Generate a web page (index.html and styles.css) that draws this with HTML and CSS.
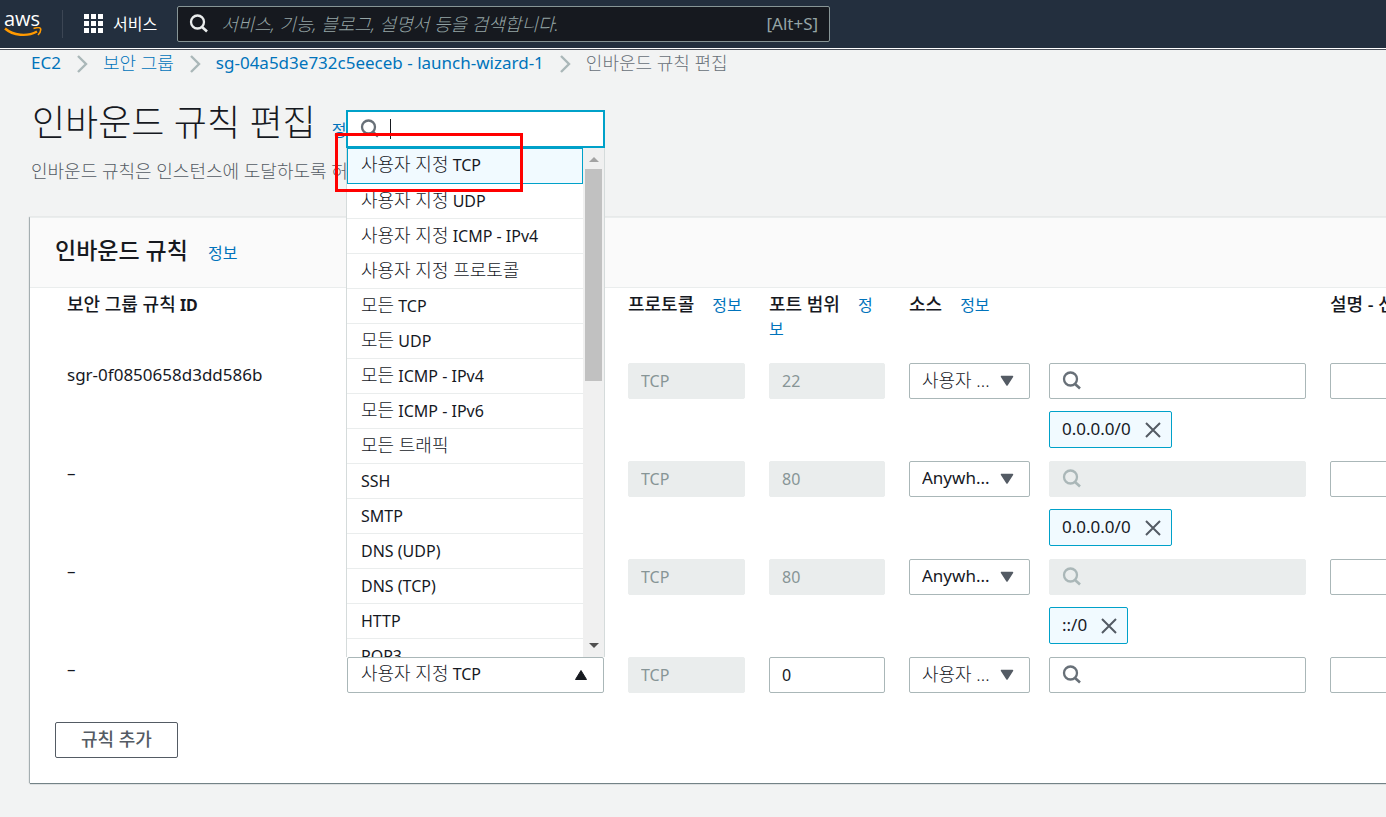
FILE: index.html
```html
<!DOCTYPE html>
<html lang="ko">
<head>
<meta charset="utf-8">
<title>인바운드 규칙 편집</title>
<link rel="stylesheet" href="styles.css">
</head>
<body>
<svg class="defs" aria-hidden="true">
  <symbol id="search" viewBox="0 0 20 20"><circle cx="8.500" cy="8" r="6.500" fill="none" stroke="currentColor" stroke-width="2.300"/><path d="M12.500 12.500 18 17.500" fill="none" stroke="currentColor" stroke-width="2.600"/></symbol>
  <symbol id="down" viewBox="0 0 14 12"><path d="M1.500 1.500h11L7 10z" fill="currentColor" stroke="currentColor" stroke-width="1.500" stroke-linejoin="round"/></symbol>
  <symbol id="up" viewBox="0 0 14 12"><path d="M1.500 10.500h11L7 1.500z" fill="currentColor" stroke="currentColor" stroke-width="1" stroke-linejoin="round"/></symbol>
  <symbol id="close" viewBox="0 0 16 16"><path d="M1 1l14 14M15 1 1 15" fill="none" stroke="currentColor" stroke-width="2"/></symbol>
  <symbol id="chevron" viewBox="0 0 12 20"><path d="M2 2l8 8-8 8" fill="none" stroke="currentColor" stroke-width="2.400"/></symbol>
</svg>
<header class="topbar">
  <a class="logo" href="#" aria-label="aws"><span class="logo-text">aws</span>
    <svg class="smile" viewBox="0 0 38 11"><path d="M1 1.500C9 8.500 23 10 33 4.500" fill="none" stroke="#ff9900" stroke-width="2.400"/><path d="M29.500 1.500C33 .5 36 .5 36.500 1.500 37 3 36 6 34 8" fill="none" stroke="#ff9900" stroke-width="1.600"/></svg>
  </a>
  <button class="services" type="button">
    <svg class="grid-icon" viewBox="0 0 19 19" fill="#fff"><path d="M0 0h5v5H0zM7 0h5v5H7zM14 0h5v5h-5zM0 7h5v5H0zM7 7h5v5H7zM14 7h5v5h-5zM0 14h5v5H0zM7 14h5v5H7zM14 14h5v5h-5z"/></svg>
    서비스
  </button>
  <label class="global-search">
    <svg class="icon"><use href="#search"/></svg>
    <input class="ko" type="text" aria-label="검색" placeholder="서비스, 기능, 블로그, 설명서 등을 검색합니다.">
    <span class="shortcut">[Alt+S]</span>
  </label>
</header>
<main class="page">
  <nav class="crumbs" aria-label="탐색 경로">
    <a href="#">EC2</a><svg class="chevron"><use href="#chevron"/></svg>
    <a class="ko" href="#">보안 그룹</a><svg class="chevron"><use href="#chevron"/></svg>
    <a href="#">sg-04a5d3e732c5eeceb - launch-wizard-1</a><svg class="chevron"><use href="#chevron"/></svg>
    <span class="ko current">인바운드 규칙 편집</span>
  </nav>
  <div class="title"><h1>인바운드 규칙 편집</h1><a class="info" href="#">정보</a></div>
  <p class="description ko">인바운드 규칙은 인스턴스에 도달하도록 허용된 수신 트래픽을 제어합니다.</p>

  <section class="panel">
    <div class="panel-head"><h2>인바운드 규칙</h2><a class="info" href="#">정보</a></div>
    <table class="rules">
      <colgroup><col class="c-id"><col class="c-type"><col class="c-proto"><col class="c-port"><col class="c-source"><col class="c-search"><col></colgroup>
      <thead>
        <tr>
          <th><span class="ko">보안 그룹 규칙</span> ID</th>
          <th><span class="ko">유형</span><a class="info" href="#">정보</a></th>
          <th><span class="ko">프로토콜</span><a class="info" href="#">정보</a></th>
          <th><span class="ko">포트 범위</span><a class="info" href="#">정보</a></th>
          <th colspan="2"><span class="ko">소스</span><a class="info" href="#">정보</a></th>
          <th><span class="ko">설명 - 선택 사항</span></th>
        </tr>
      </thead>
      <tbody>
        <tr>
          <td>sgr-0f0850658d3dd586b</td>
          <td></td>
          <td><input class="field" aria-label="프로토콜" value="TCP" disabled></td>
          <td><input class="field" aria-label="포트 범위" value="22" disabled></td>
          <td><div class="pick"><select class="field ko" aria-label="소스"><option>사용자 ...</option></select><svg class="arrow"><use href="#down"/></svg></div></td>
          <td><label class="lookup field"><svg class="icon"><use href="#search"/></svg><input aria-label="소스 검색"></label>
            <span class="token">0.0.0.0/0<button type="button" aria-label="제거"><svg class="x"><use href="#close"/></svg></button></span></td>
          <td><input class="field" aria-label="설명"></td>
        </tr>
        <tr>
          <td>–</td>
          <td></td>
          <td><input class="field" aria-label="프로토콜" value="TCP" disabled></td>
          <td><input class="field" aria-label="포트 범위" value="80" disabled></td>
          <td><div class="pick"><select class="field" aria-label="소스"><option>Anywh...</option></select><svg class="arrow"><use href="#down"/></svg></div></td>
          <td><label class="lookup field off"><svg class="icon"><use href="#search"/></svg><input aria-label="소스 검색" disabled></label>
            <span class="token">0.0.0.0/0<button type="button" aria-label="제거"><svg class="x"><use href="#close"/></svg></button></span></td>
          <td><input class="field" aria-label="설명"></td>
        </tr>
        <tr>
          <td>–</td>
          <td></td>
          <td><input class="field" aria-label="프로토콜" value="TCP" disabled></td>
          <td><input class="field" aria-label="포트 범위" value="80" disabled></td>
          <td><div class="pick"><select class="field" aria-label="소스"><option>Anywh...</option></select><svg class="arrow"><use href="#down"/></svg></div></td>
          <td><label class="lookup field off"><svg class="icon"><use href="#search"/></svg><input aria-label="소스 검색" disabled></label>
            <span class="token">::/0<button type="button" aria-label="제거"><svg class="x"><use href="#close"/></svg></button></span></td>
          <td><input class="field" aria-label="설명"></td>
        </tr>
        <tr>
          <td>–</td>
          <td>
            <div class="pick">
              <button class="field trigger" type="button" aria-haspopup="listbox" aria-expanded="true"><span class="ko">사용자 지정</span> TCP</button>
              <svg class="arrow dark"><use href="#up"/></svg>
              <div class="menu">
                <label class="filter"><svg class="icon"><use href="#search"/></svg><span class="caret"></span><input aria-label="유형 검색"></label>
                <div class="menu-body">
                  <ul class="options" role="listbox">
                    <li class="selected" role="option" aria-selected="true"><span class="ko">사용자 지정</span> TCP</li>
                    <li role="option"><span class="ko">사용자 지정</span> UDP</li>
                    <li role="option"><span class="ko">사용자 지정</span> ICMP - IPv4</li>
                    <li role="option"><span class="ko">사용자 지정 프로토콜</span></li>
                    <li role="option"><span class="ko">모든</span> TCP</li>
                    <li role="option"><span class="ko">모든</span> UDP</li>
                    <li role="option"><span class="ko">모든</span> ICMP - IPv4</li>
                    <li role="option"><span class="ko">모든</span> ICMP - IPv6</li>
                    <li role="option"><span class="ko">모든 트래픽</span></li>
                    <li role="option">SSH</li>
                    <li role="option">SMTP</li>
                    <li role="option">DNS (UDP)</li>
                    <li role="option">DNS (TCP)</li>
                    <li role="option">HTTP</li>
                    <li role="option">POP3</li>
                  </ul>
                  <div class="scrollbar" aria-hidden="true"><span class="tri-up"></span><span class="thumb"></span><span class="tri-down"></span></div>
                </div>
                <div class="highlight"></div>
              </div>
            </div>
          </td>
          <td><input class="field" aria-label="프로토콜" value="TCP" disabled></td>
          <td><input class="field" aria-label="포트 범위" value="0"></td>
          <td><div class="pick"><select class="field ko" aria-label="소스"><option>사용자 ...</option></select><svg class="arrow"><use href="#down"/></svg></div></td>
          <td><label class="lookup field"><svg class="icon"><use href="#search"/></svg><input aria-label="소스 검색"></label></td>
          <td><input class="field" aria-label="설명"></td>
        </tr>
      </tbody>
    </table>
    <button class="add ko" type="button">규칙 추가</button>
  </section>
</main>
</body>
</html>
```
FILE: styles.css
```css
* { box-sizing: border-box; }
body {
  margin: 0;
  min-height: 100vh;
  background: #f2f3f3;
  color: #16191f;
  font: 16px/24px "Noto Sans", "Noto Sans CJK KR", sans-serif;
}
input, select, button { font: inherit; color: inherit; }
a { color: #0073bb; text-decoration: none; }
.defs { position: absolute; width: 0; height: 0; }
.page { overflow-x: clip; padding-bottom: 24px; }
.ko { font-size: 18px; font-weight: 300; }
.icon { flex: none; width: 20px; height: 20px; color: #687078; }
.info { font-size: 16px; font-weight: 400; margin-left: 18px; }

.topbar {
  display: flex;
  align-items: center;
  height: 50px;
  padding-bottom: 2px;
  background: #232f3e;
  border-bottom: 1px solid #4b5059;
  box-shadow: inset 0 -1px #fff;
  color: #fff;
}
.logo { display: flex; flex-direction: column; width: 63px; height: 28px; padding-left: 4px; border-right: 1px solid #3c4654; color: #fff; }
.logo-text { font: 500 20px/17px "Open Sans", sans-serif; }
.smile { width: 38px; height: 11px; }
.services { display: flex; align-items: center; gap: 10px; padding: 0; margin-left: 21px; border: 0; background: none; color: #fff; }
.grid-icon { width: 19px; height: 19px; }
.global-search {
  display: flex;
  align-items: center;
  width: 653px;
  height: 36px;
  margin-left: 20px;
  padding: 0 11px;
  background: #16191f;
  border: 1px solid #879596;
  border-radius: 2px;
}
.global-search .icon { color: #eaeded; }
.global-search input { flex: 1; min-width: 0; padding: 0; margin-left: 12px; border: 0; background: none; outline: 0; }
.global-search input::placeholder { color: #95a5a6; font-style: italic; opacity: 1; }
.shortcut { color: #95a5a6; font-size: 17px; }

.crumbs { display: flex; align-items: center; height: 24px; margin: 1px 0 0 31px; font-size: 17px; white-space: nowrap; }
.crumbs .current { color: #687078; }
.chevron { width: 12px; height: 20px; margin: 2px 15px 0; color: #aab7b8; }
.title { display: flex; align-items: baseline; margin: 24px 0 0 32px; }
.title .info { margin-left: 16px; }
h1 { margin: 0; font-size: 36px; line-height: 48px; font-weight: 300; }
.description { margin: 12px 0 0 31px; color: #545b64; line-height: 24px; white-space: nowrap; }

.panel {
  width: max-content;
  min-width: 100%;
  margin: 34px 0 0 30px;
  padding-bottom: 25px;
  background: #fff;
  border-top: 1px solid #eaeded;
  box-shadow: 0 1px 1px rgba(0, 28, 36, .5), -1px 0 1px rgba(0, 28, 36, .25);
}
.panel-head { display: flex; align-items: baseline; height: 70px; padding: 16px 25px; background: #fafafa; border-bottom: 1px solid #eaeded; }
h2 { margin: 0; font-size: 23px; line-height: 32px; font-weight: 500; }
h2 + .info { margin-left: 20px; }

.rules { table-layout: fixed; width: 1640px; margin-left: 37px; border-collapse: collapse; }
.c-id { width: 280px; }
.c-type, .c-search { width: 281px; }
.c-proto { width: 141px; }
.c-port, .c-source { width: 140px; }
th { padding: 4px 24px 22px 0; text-align: left; vertical-align: top; font-weight: 700; line-height: 24px; }
th:nth-child(3) { padding-right: 0; }
th .ko { font-weight: 500; }
td { height: 98px; padding: 0 24px 0 0; vertical-align: top; font-size: 17px; }
td:nth-child(5) { padding-right: 19px; }
tbody tr:last-child td { height: 36px; }
.field { display: block; width: 100%; height: 36px; padding: 0 12px; border: 1px solid #aab7b8; border-radius: 2px; background: #fff; text-align: left; }
input.field, .trigger { font-size: 16px; }
.field:disabled, .field.off { background: #eaeded; border-color: #eaeded; color: #879596; }
.field.trigger { padding: 0 13px 2px; }
.trigger .ko { line-height: 20px; }
.pick { position: relative; font-size: 16px; }
.pick select { appearance: none; padding-bottom: 2px; font-size: 17px; }
.pick select.ko { font-size: 18px; }
.arrow { position: absolute; right: 16px; top: 12px; width: 14px; height: 12px; color: #545b64; pointer-events: none; }
.arrow.dark { color: #16191f; }
.lookup { display: flex; align-items: center; }
.lookup.off .icon { color: #aab7b8; }
.lookup input { flex: 1; min-width: 0; border: 0; background: none; }
.token { display: inline-flex; align-items: center; gap: 14px; height: 37px; margin-top: 12px; padding: 0 10px 2px 12px; background: #f1faff; border: 1px solid #00a1c9; border-radius: 2px; }
.token button { display: flex; padding: 2px 0 0; border: 0; background: none; color: #545b64; }
.x { width: 16px; height: 16px; }
.add { height: 36px; margin: 29px 0 0 25px; padding: 0 25px 2px; border: 1px solid #545b64; border-radius: 2px; background: #fff; color: #545b64; font-weight: 500; }

.menu { position: absolute; left: -1px; right: -1px; bottom: 36px; z-index: 2; }
.filter { display: flex; align-items: center; height: 38px; padding: 0 12px; background: #fff; border: 2px solid #00a1c9; }
.filter input { flex: 1; min-width: 0; border: 0; background: none; outline: 0; }
.caret { width: 1px; height: 20px; margin-left: 10px; background: #16191f; }
.menu-body { display: flex; height: 509px; overflow: hidden; border: solid #d5dbdb; border-width: 0 1px; background: #fff; }
.options { flex: 1; margin: 0; padding: 0; list-style: none; }
.options li { height: 35px; padding: 5px 14px; line-height: 24px; border-bottom: 1px solid #eaeded; white-space: nowrap; }
.options .ko { line-height: 20px; }
.options .selected { height: 36px; padding: 4px 13px; background: #f1faff; border: 1px solid #00a1c9; }
.scrollbar { display: flex; flex-direction: column; align-items: center; width: 21px; padding: 9px 0; background: #f0f0f0; }
.tri-up { border: 5px solid transparent; border-top: 0; border-bottom-color: #a3a3a3; }
.thumb { width: 17px; height: 212px; margin-top: 7px; background: #c1c1c1; }
.tri-down { margin-top: auto; border: 5px solid transparent; border-bottom: 0; border-top-color: #505050; }
.highlight { position: absolute; left: -11px; top: 23px; width: 188px; height: 59px; border: 3px solid #f00; }
```
